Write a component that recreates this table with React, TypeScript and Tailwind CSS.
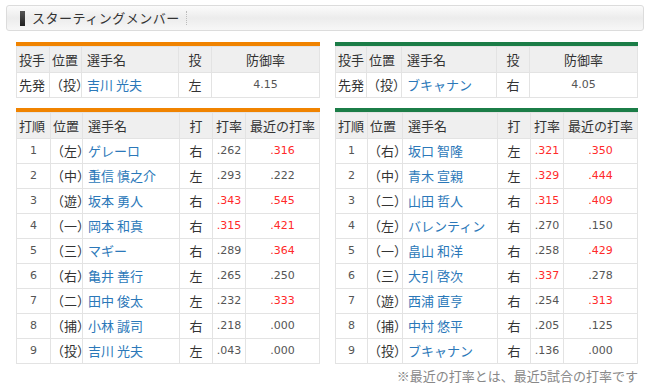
const jp = { fontFamily: '"Noto Sans CJK JP", "Noto Sans", sans-serif' }
const num = { fontFamily: '"DejaVu Sans", "Liberation Sans", sans-serif' }

type Batter = { no: string; pos: string; name: string; hand: string; avg: string; avgHot: boolean; recent: string; recentHot: boolean }

const giants: Batter[] = [
  { no: '1', pos: '（左）', name: 'ゲレーロ', hand: '右', avg: '.262', avgHot: false, recent: '.316', recentHot: true },
  { no: '2', pos: '（中）', name: '重信 慎之介', hand: '左', avg: '.293', avgHot: false, recent: '.222', recentHot: false },
  { no: '3', pos: '（遊）', name: '坂本 勇人', hand: '右', avg: '.343', avgHot: true, recent: '.545', recentHot: true },
  { no: '4', pos: '（一）', name: '岡本 和真', hand: '右', avg: '.315', avgHot: true, recent: '.421', recentHot: true },
  { no: '5', pos: '（三）', name: 'マギー', hand: '右', avg: '.289', avgHot: false, recent: '.364', recentHot: true },
  { no: '6', pos: '（右）', name: '亀井 善行', hand: '左', avg: '.265', avgHot: false, recent: '.250', recentHot: false },
  { no: '7', pos: '（二）', name: '田中 俊太', hand: '左', avg: '.232', avgHot: false, recent: '.333', recentHot: true },
  { no: '8', pos: '（捕）', name: '小林 誠司', hand: '右', avg: '.218', avgHot: false, recent: '.000', recentHot: false },
  { no: '9', pos: '（投）', name: '吉川 光夫', hand: '左', avg: '.043', avgHot: false, recent: '.000', recentHot: false },
]

const swallows: Batter[] = [
  { no: '1', pos: '（右）', name: '坂口 智隆', hand: '左', avg: '.321', avgHot: true, recent: '.350', recentHot: true },
  { no: '2', pos: '（中）', name: '青木 宣親', hand: '左', avg: '.329', avgHot: true, recent: '.444', recentHot: true },
  { no: '3', pos: '（二）', name: '山田 哲人', hand: '右', avg: '.315', avgHot: true, recent: '.409', recentHot: true },
  { no: '4', pos: '（左）', name: 'バレンティン', hand: '右', avg: '.270', avgHot: false, recent: '.150', recentHot: false },
  { no: '5', pos: '（一）', name: '畠山 和洋', hand: '右', avg: '.258', avgHot: false, recent: '.429', recentHot: true },
  { no: '6', pos: '（三）', name: '大引 啓次', hand: '右', avg: '.337', avgHot: true, recent: '.278', recentHot: false },
  { no: '7', pos: '（遊）', name: '西浦 直亨', hand: '右', avg: '.254', avgHot: false, recent: '.313', recentHot: true },
  { no: '8', pos: '（捕）', name: '中村 悠平', hand: '右', avg: '.205', avgHot: false, recent: '.125', recentHot: false },
  { no: '9', pos: '（投）', name: 'ブキャナン', hand: '右', avg: '.136', avgHot: false, recent: '.000', recentHot: false },
]

// base cell styles carry no text colour so per-cell colours always apply
const th = 'border border-[#e3e3e3] bg-[#efefef] font-normal text-[13px] text-[#333] h-[26px] p-0 whitespace-nowrap'
const td = 'border border-[#e3e3e3] h-[25px] p-0 whitespace-nowrap'
const jpText = 'text-[13px] text-[#333]'
const numText = 'text-[11px] text-[#555]'
const hotText = 'text-[11px] text-[#ff2a2a]'

function PitcherTable({ color, name, hand, era, w }: { color: string; name: string; hand: string; era: string; w: number[] }) {
  const heads = ['投手', '位置', '選手名', '投', '防御率']
  return (
    <div>
      <div className={`h-[4px] ${color}`} />
      <div className="grid border-l border-t border-[#e3e3e3]" style={{ gridTemplateColumns: `${w.map((x) => x + 'px').join(' ')} 1fr` }}>
        {heads.map((h, i) => (
          <div
            key={h}
            className={`h-[26px] flex items-center bg-[#efefef] border-r border-b border-[#e3e3e3] text-[13px] text-[#333] ${i < 3 ? (i === 2 ? 'pl-[5px]' : 'pl-[2px]') : 'justify-center'}`}
          >
            {h}
          </div>
        ))}
        <div className={`h-[25px] flex items-center border-r border-b border-[#e3e3e3] ${jpText} pl-[2px]`}>先発</div>
        <div className={`h-[25px] flex items-center border-r border-b border-[#e3e3e3] ${jpText}`}>（投）</div>
        <div className="h-[25px] flex items-center border-r border-b border-[#e3e3e3] pl-[5px] text-[13px] text-[#2b78b9]">{name}</div>
        <div className={`h-[25px] flex items-center justify-center border-r border-b border-[#e3e3e3] ${jpText}`}>{hand}</div>
        <div className={`h-[25px] flex items-center justify-center border-r border-b border-[#e3e3e3] ${numText}`} style={num}>{era}</div>
      </div>
    </div>
  )
}

function BattingTable({ color, rows, w }: { color: string; rows: Batter[]; w: number[] }) {
  return (
    <div>
      <div className={`h-[4px] ${color}`} />
      <table className="w-full border-collapse table-fixed" style={jp}>
        <colgroup>
          {w.map((x, i) => <col key={i} style={{ width: x }} />)}
          <col />
        </colgroup>
        <tbody>
          <tr>
            <td className={`${th} text-left pl-[2px]`}>打順</td>
            <td className={`${th} text-left pl-[2px]`}>位置</td>
            <td className={`${th} text-left pl-[5px]`}>選手名</td>
            <td className={`${th} text-center`}>打</td>
            <td className={`${th} text-center`}>打率</td>
            <td className={`${th} text-center`}>最近の打率</td>
          </tr>
          {rows.map((r) => (
            <tr key={r.no}>
              <td className={`${td} ${numText} text-center`} style={num}>{r.no}</td>
              <td className={`${td} ${jpText}`}>{r.pos}</td>
              <td className={`${td} pl-[5px] text-[13px] text-[#2b78b9]`}>{r.name}</td>
              <td className={`${td} ${jpText} text-center`}>{r.hand}</td>
              <td className={`${td} text-center ${r.avgHot ? hotText : numText}`} style={num}>{r.avg}</td>
              <td className={`${td} text-center ${r.recentHot ? hotText : numText}`} style={num}>{r.recent}</td>
            </tr>
          ))}
        </tbody>
      </table>
    </div>
  )
}

export default function App() {
  return (
    <div className="w-[650px] h-[391px] bg-white overflow-hidden" style={jp}>
      <div className="mx-[6px] mt-[5px] h-[26px] rounded-[3px] border border-[#dcdcdc] bg-gradient-to-b from-[#fbfbfb] via-[#ececec] to-[#f7f7f7] flex items-center">
        <div className="ml-[13px] w-[5px] h-[15px] bg-gradient-to-b from-[#555] to-[#222]" />
        <span className="ml-[7px] text-[13px] text-[#333] tracking-[0.5px]">スターティングメンバー</span>
        <span className="ml-[6px] h-[14px] border-l border-dotted border-[#bbb]" />
      </div>

      <div className="flex gap-[15px] pl-[16px] mt-[11px]">
        <div className="w-[304px]">
          <PitcherTable color="bg-[#f08300]" name="吉川 光夫" hand="左" era="4.15" w={[33, 32, 97, 33]} />
          <div className="h-[10px]" />
          <BattingTable color="bg-[#f08300]" rows={giants} w={[34, 32, 97, 33, 33]} />
        </div>
        <div className="w-[303px]">
          <PitcherTable color="bg-[#1b7d47]" name="ブキャナン" hand="右" era="4.05" w={[31, 35, 95, 33]} />
          <div className="h-[10px]" />
          <BattingTable color="bg-[#1b7d47]" rows={swallows} w={[32, 35, 95, 33, 33]} />
          <p className="mt-[2px] text-right text-[13px] text-[#888]">※最近の打率とは、最近5試合の打率です</p>
        </div>
      </div>
    </div>
  )
}
